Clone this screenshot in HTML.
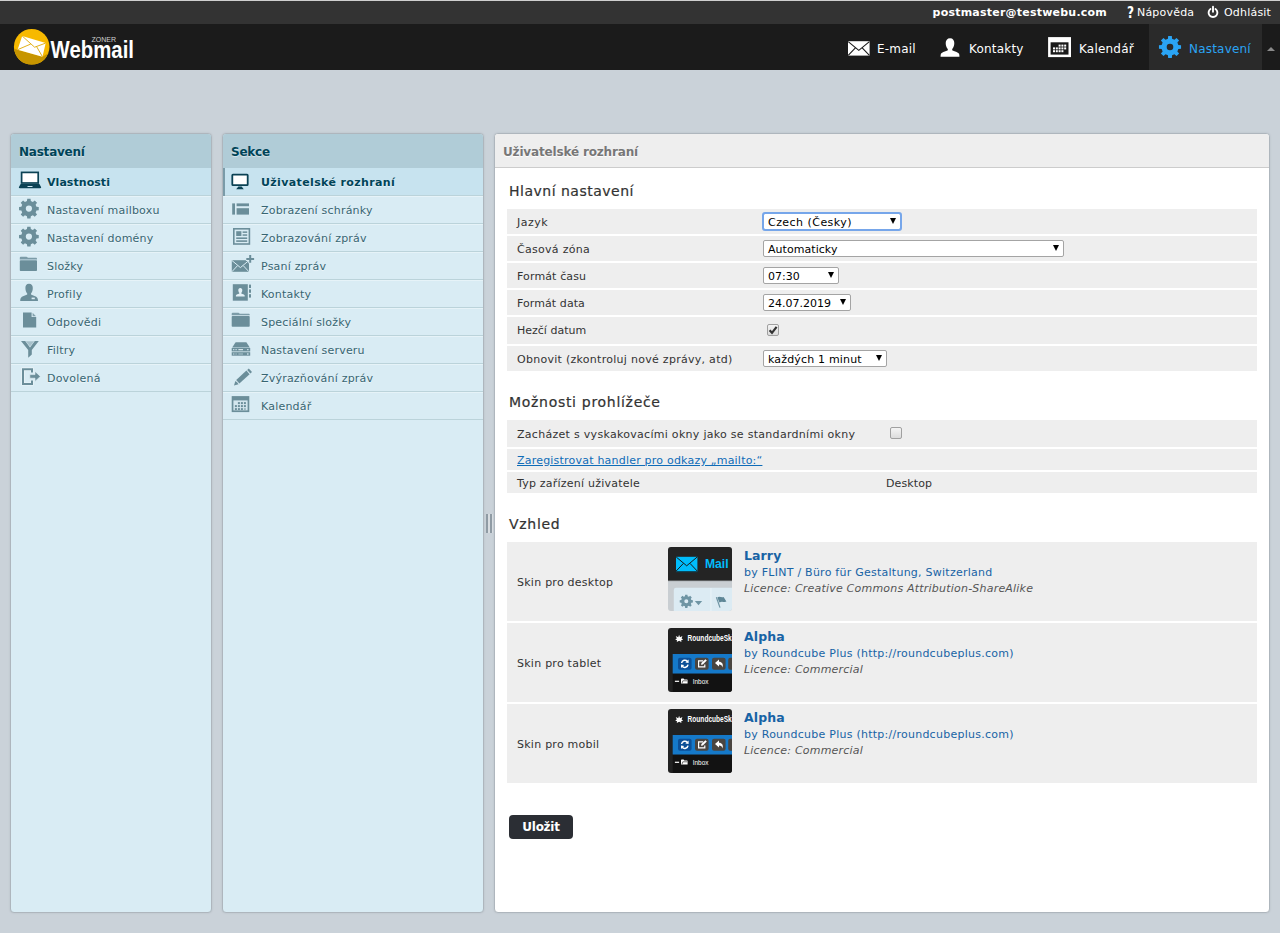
<!DOCTYPE html>
<html lang="cs">
<head>
<meta charset="utf-8">
<title>Zoner Webmail :: Nastavení</title>
<style>
*{box-sizing:content-box}
html,body{margin:0;padding:0;width:1280px;height:933px;overflow:hidden}
body{font-family:"DejaVu Sans","Liberation Sans",sans-serif;font-size:11px;color:#333;background:#cad2d9;position:relative}
a{text-decoration:none;color:inherit}
#topline{position:absolute;left:0;top:0;width:1280px;height:24px;background:#333}
#topline .user{position:absolute;right:173px;top:6px;color:#fff;font-weight:bold;font-size:11px;letter-spacing:.22px}
#topline .lnk{position:absolute;top:6px;color:#fff;font-size:11px}
#topnav{position:absolute;left:0;top:24px;width:1280px;height:46px;background:#1b1b1b}
#taskbar a{position:absolute;top:0;height:46px;color:#fff;font-size:12px}
#taskbar a span{position:absolute;top:18px;white-space:nowrap}
#taskbar a.sel{background:#2a2a2a;color:#2aa4f4}
.uibox{position:absolute;border:1px solid #aeb6bd;border-radius:4px;box-shadow:0 0 2px #b4bcc3;background:#fff;overflow:hidden}
.listbox{background:#d9ecf4}
.boxtitle{height:19px;padding:11px 8px 3px 8px;margin:0;font-size:12px;font-weight:bold;background:#b0ccd7;color:#004458;border-bottom:1px solid #b0ccd7;text-shadow:0 1px 1px rgba(255,255,255,.5);white-space:nowrap}
.listitem{display:block;border-top:1px solid #e6f3f8;border-bottom:1px solid #bbd3da;height:26px;position:relative;color:#376572;text-shadow:0 1px 1px rgba(255,255,255,.6);white-space:nowrap}
.listitem span{position:absolute;left:36px;top:7px}
.listitem.selected{background:#c7e3ef;border-top-color:#c7e3ef;color:#004458;font-weight:bold}
.listitem svg{position:absolute;left:0;top:0}
#prefs-title{height:19px;padding:11px 8px 3px 8px;font-size:12px;font-weight:bold;color:#777;background:#eee;border-bottom:1px solid #ccc;text-shadow:0 1px 1px #fff}

h1,h2{margin:0}
.listitem,.lnk,td,.legend{letter-spacing:.2px}
.selected span{letter-spacing:.37px}
#settings-sections .selected span{letter-spacing:.05px}
.boxtitle{letter-spacing:-.22px}
#prefs-title{letter-spacing:-.16px}
#splitter{position:absolute;left:486px;top:514px;width:7px;height:19px;background:linear-gradient(90deg,#8f9ba4 0,#8f9ba4 2px,#d8dde1 2px,#d8dde1 4px,#8f9ba4 4px,#8f9ba4 6px,#d8dde1 6px)}
#sectionslist .listitem span{left:38px}
.legend{position:absolute;left:509px;font-size:14px;color:#333;white-space:nowrap;-webkit-text-stroke:.2px #333}
.row{position:absolute;left:507px;width:750px;background:#eee}
.row .lbl{position:absolute;left:10px;white-space:nowrap;color:#333;letter-spacing:.2px}
.dd{position:absolute;height:15px;border:1px solid #a4a4a4;border-radius:2px;background:#fff;color:#000;font-size:11px;letter-spacing:.2px}
.dd span{position:absolute;left:4px;top:2px;white-space:nowrap}
.dd.focus{outline:2px solid #76a6ea;outline-offset:-1px;border-radius:2px;border-color:#76a6ea}
.dd i{position:absolute;right:4px;top:4px;width:0;height:0;border-left:3.5px solid transparent;border-right:3.5px solid transparent;border-top:6px solid #000}
.cb{position:absolute;width:10px;height:10px;border:1px solid #a0a0a0;border-radius:2px;background:linear-gradient(#f4f4f4,#dcdcdc)}
.skin .nm{position:absolute;left:237px;top:6px;font-size:12.5px;font-weight:bold;color:#1763a5;letter-spacing:.3px}
.skin .by{position:absolute;left:237px;top:24px;color:#1763a5;white-space:nowrap;letter-spacing:.25px}
.skin .lic{position:absolute;left:237px;top:39.5px;color:#555;font-style:italic;white-space:nowrap;letter-spacing:.25px}
.skin svg{position:absolute;left:161px;top:5px;border-radius:3px}
#savebtn{position:absolute;left:509px;top:815px;width:64px;height:24px;border-radius:4px;background:#2b2e34;color:#fff;font-weight:bold;font-size:12px;text-align:center;line-height:24px;letter-spacing:-.27px}
#topline .q{position:absolute;left:1126.5px;top:3px;color:#fff;font-size:16px;font-weight:bold;transform:scaleX(.76);transform-origin:0 0}
#topline .pw{position:absolute;left:1206px;top:5px}
#topline:before{content:"";position:absolute;left:0;top:0;width:1280px;height:1px;background:#cfcfcf}
#logo{position:absolute;left:8px;top:0}
#tbarrow{position:absolute;left:1267px;top:23px;width:0;height:0;border-left:4px solid transparent;border-right:4px solid transparent;border-bottom:4px solid #8a8a8a}
#taskbar a span{letter-spacing:.2px}
#sectionslist .selected:before{content:"";position:absolute;left:0;top:-1px;width:2px;height:28px;background:#7a9ba8}
</style>
</head>
<body>
<div id="topline">
  <span class="user">postmaster@testwebu.com</span>
  <b class="q">?</b>
  <a class="lnk" style="left:1137px">Nápověda</a>
  <svg class="pw" width="14" height="14" viewBox="0 0 14 14"><path d="M4.5 4 A4.4 4.4 0 1 0 9.5 4" fill="none" stroke="#fff" stroke-width="1.9" stroke-linecap="round"/><path d="M7 1.6 L7 6.8" stroke="#fff" stroke-width="1.9" stroke-linecap="round"/></svg>
  <a class="lnk" style="left:1224px">Odhlásit</a>
</div>
<div id="topnav">
  <svg id="logo" width="140" height="46" viewBox="0 0 140 46">
    <defs><clipPath id="lc"><circle cx="23.7" cy="22.8" r="17.8"/></clipPath></defs>
    <circle cx="23.7" cy="22.8" r="17.8" fill="#f7b900"/>
    <path d="M0 23 L9.6 25.7 L34.5 32.8 L46 26 L46 46 L0 46Z" fill="#c79500" clip-path="url(#lc)"/>
    <path d="M14.2 12 L37.7 19.1 L34.5 32.8 L9.6 25.7Z" fill="#fff"/>
    <path d="M14.2 12 L26.6 23.2 L37.7 19.1 M9.6 25.7 L22.8 20 M34.5 32.8 L28.6 22.6" fill="none" stroke="#dfa800" stroke-width=".9"/>
    <text x="42.6" y="33.8" font-family="Liberation Sans, sans-serif" font-weight="bold" font-size="23.6" fill="#fff" textLength="83.4" lengthAdjust="spacingAndGlyphs">Webmail</text>
    <text x="83.4" y="17.7" font-family="Liberation Sans, sans-serif" font-size="7" fill="#d0d0d0" textLength="24.6" lengthAdjust="spacingAndGlyphs">ZONER</text>
  </svg>
  <div id="taskbar">
    <a style="left:838px;width:86px"><svg width="24" height="17" viewBox="0 0 24 17" style="position:absolute;left:9px;top:16.4px"><rect x="1" y="1.2" width="21.6" height="14.4" fill="#fff"/><path d="M1.2 1.6 L11.8 10.4 L22.4 1.6 M1.2 15.4 L8.4 7.8 M22.4 15.4 L15.2 7.8" fill="none" stroke="#1b1b1b" stroke-width="1.1"/></svg><span style="left:39px">E-mail</span></a>
    <a style="left:930px;width:104px"><svg width="22" height="21" viewBox="-0.6 -0.8 23 22" style="position:absolute;left:9px;top:13px"><path d="M11 .6 C14 .6 15.4 2.8 15.4 5.6 C15.4 8.4 14.4 10.6 13.2 11.8 L13.2 13 C15.4 14.2 19.4 14.8 20.4 16.8 Q20.8 17.8 20.8 19.9 L1 19.9 Q1 17.8 1.4 16.8 C2.4 14.8 6.4 14.2 8.6 13 L8.6 11.8 C7.4 10.6 6.4 8.4 6.4 5.6 C6.4 2.8 8 .6 11 .6Z" fill="#fff"/></svg><span style="left:39px">Kontakty</span></a>
    <a style="left:1040px;width:104px"><svg width="24" height="21" viewBox="0 0 24 21" style="position:absolute;left:8px;top:12.8px"><rect x=".1" y=".1" width="22.9" height="20" fill="#fff"/><rect x="2.6" y="5.3" width="17.9" height="12.3" fill="#1b1b1b"/>
      <g fill="#fff"><rect x="10.6" y="7.6" width="2" height="2"/><rect x="13.4" y="7.6" width="2" height="2"/><rect x="16.2" y="7.6" width="2" height="2"/>
      <rect x="5" y="10.4" width="2" height="2"/><rect x="7.8" y="10.4" width="2" height="2"/><rect x="10.6" y="10.4" width="2" height="2"/><rect x="13.4" y="10.4" width="2" height="2"/><rect x="16.2" y="10.4" width="2" height="2"/>
      <rect x="5" y="13.2" width="2" height="2"/><rect x="7.8" y="13.2" width="2" height="2"/><rect x="10.6" y="13.2" width="2" height="2"/><rect x="13.4" y="13.2" width="2" height="2"/></g></svg><span style="left:39px">Kalendář</span></a>
    <a class="sel" style="left:1149px;width:113px"><svg width="24" height="24" viewBox="0 0 24 24" style="position:absolute;left:9px;top:11.3px"><path d="M9.93 3.65 L10.16 0.95 L13.84 0.95 L14.07 3.65 L16.44 4.63 L18.51 2.89 L21.11 5.49 L19.37 7.56 L20.35 9.93 L23.05 10.16 L23.05 13.84 L20.35 14.07 L19.37 16.44 L21.11 18.51 L18.51 21.11 L16.44 19.37 L14.07 20.35 L13.84 23.05 L10.16 23.05 L9.93 20.35 L7.56 19.37 L5.49 21.11 L2.89 18.51 L4.63 16.44 L3.65 14.07 L0.95 13.84 L0.95 10.16 L3.65 9.93 L4.63 7.56 L2.89 5.49 L5.49 2.89 L7.56 4.63Z M8.70 12.00 a3.30 3.30 0 1 0 6.60 0 a3.30 3.30 0 1 0 -6.60 0Z" fill="#2aa4f4" fill-rule="evenodd"/></svg><span style="left:40px">Nastavení</span></a>
  </div>
  <div id="tbarrow"></div>
</div>
<div class="uibox listbox" id="settings-sections" style="left:10px;top:133px;width:200px;height:778px">
  <h2 class="boxtitle">Nastavení</h2>
  <a class="listitem selected"><svg width="34" height="26" viewBox="0 0 34 26" ><rect x="10.6" y="3.4" width="16.6" height="10.6" fill="#fff" stroke="#0b4254" stroke-width="1.7"/><path d="M9.6 15 L28.4 15 L30.2 18.2 Q30.2 19.2 29 19.2 L9 19.2 Q7.8 19.2 7.8 18.2Z" fill="#0b4254"/><rect x="16.5" y="17" width="5" height="1" fill="#cfe6f0"/></svg><span>Vlastnosti</span></a>
  <a class="listitem"><svg width="34" height="26" viewBox="0 0 34 26" ><path d="M15.96 4.05 L16.26 1.74 L19.54 1.74 L19.84 4.05 L21.87 4.89 L23.71 3.46 L26.04 5.79 L24.61 7.63 L25.45 9.66 L27.76 9.96 L27.76 13.24 L25.45 13.54 L24.61 15.57 L26.04 17.41 L23.71 19.74 L21.87 18.31 L19.84 19.15 L19.54 21.46 L16.26 21.46 L15.96 19.15 L13.93 18.31 L12.09 19.74 L9.76 17.41 L11.19 15.57 L10.35 13.54 L8.04 13.24 L8.04 9.96 L10.35 9.66 L11.19 7.63 L9.76 5.79 L12.09 3.46 L13.93 4.89Z M14.80 11.60 a3.10 3.10 0 1 0 6.20 0 a3.10 3.10 0 1 0 -6.20 0Z" fill="#6b8e9a" fill-rule="evenodd"/></svg><span>Nastavení mailboxu</span></a>
  <a class="listitem"><svg width="34" height="26" viewBox="0 0 34 26" ><path d="M15.96 4.05 L16.26 1.74 L19.54 1.74 L19.84 4.05 L21.87 4.89 L23.71 3.46 L26.04 5.79 L24.61 7.63 L25.45 9.66 L27.76 9.96 L27.76 13.24 L25.45 13.54 L24.61 15.57 L26.04 17.41 L23.71 19.74 L21.87 18.31 L19.84 19.15 L19.54 21.46 L16.26 21.46 L15.96 19.15 L13.93 18.31 L12.09 19.74 L9.76 17.41 L11.19 15.57 L10.35 13.54 L8.04 13.24 L8.04 9.96 L10.35 9.66 L11.19 7.63 L9.76 5.79 L12.09 3.46 L13.93 4.89Z M14.80 11.60 a3.10 3.10 0 1 0 6.20 0 a3.10 3.10 0 1 0 -6.20 0Z" fill="#6b8e9a" fill-rule="evenodd"/></svg><span>Nastavení domény</span></a>
  <a class="listitem"><svg width="34" height="26" viewBox="0 0 34 26" ><path d="M8.8 6.4 L8.8 4.8 Q8.8 3.8 9.8 3.8 L15.3 3.8 Q16.3 3.8 16.8 4.8 L25.2 4.8 Q26 4.8 26 5.8 L26 6.4Z" fill="#6b8e9a" opacity=".85"/><rect x="8.8" y="7.199999999999999" width="17.2" height="10.799999999999999" rx=".8" fill="#6b8e9a"/></svg><span>Složky</span></a>
  <a class="listitem"><svg width="34" height="26" viewBox="0 0 34 26" ><path d="M18 2.8 C20.6 2.8 21.8 4.6 21.8 7 C21.8 9.4 21 11.4 20 12.4 L20 13.6 C22 14.6 25.4 15.2 26.4 17 Q27 18.2 27 20 L9.2 20 Q9.2 18.2 9.8 17 C10.8 15.2 14.2 14.6 16.2 13.6 L16.2 12.4 C15.2 11.4 14.4 9.4 14.4 7 C14.4 4.6 15.4 2.8 18 2.8Z" fill="#6b8e9a"/><rect x="20.6" y="16.6" width="3.2" height="1.6" fill="#d9ecf4"/></svg><span>Profily</span></a>
  <a class="listitem"><svg width="34" height="26" viewBox="0 0 34 26" ><path d="M12 3.4 L20.6 3.4 L20.6 8 L25.2 8 L25.2 18.4 L12 18.4Z" fill="#6b8e9a"/><path d="M21.6 3.8 L25 7.2 L21.6 7.2Z" fill="#6b8e9a" opacity=".8"/></svg><span>Odpovědi</span></a>
  <a class="listitem"><svg width="34" height="26" viewBox="0 0 34 26" ><path d="M10 4 L14.2 4 L19 10.4 L23.8 4 L27.8 4 L20.8 13 L20.8 17.6 L17.2 20.8 L17.2 13Z" fill="#6b8e9a"/><path d="M14.8 4.2 L23.2 4.2 L19 9.6Z" fill="#6b8e9a" opacity=".45"/></svg><span>Filtry</span></a>
  <a class="listitem"><svg width="34" height="26" viewBox="0 0 34 26" ><path d="M21 7.4 L21 4.2 L12 4.2 L12 19 L21 19 L21 15.6" fill="none" stroke="#fff" stroke-width="3.2" opacity=".55"/><path d="M21 7.6 L21 4.2 L12 4.2 L12 19 L21 19 L21 15.4" fill="none" stroke="#6b8e9a" stroke-width="2"/><path d="M18.8 9.6 L24 9.6 L24 6.4 L29.4 11.4 L24 16.4 L24 13.2 L18.8 13.2Z" fill="#6b8e9a" stroke="#e8f4f9" stroke-width=".6"/></svg><span>Dovolená</span></a>
</div>
<div class="uibox listbox" id="sectionslist" style="left:222px;top:133px;width:260px;height:778px">
  <h2 class="boxtitle">Sekce</h2>
  <a class="listitem selected"><svg width="34" height="26" viewBox="0 0 34 26" ><rect x="9.3" y="5.7" width="15.4" height="10.4" rx=".6" fill="#fff" stroke="#0b4254" stroke-width="1.8"/><path d="M15.4 17.4 L18.6 17.4 L20.8 20.2 L13.2 20.2Z" fill="#0b4254"/></svg><span>Uživatelské rozhraní</span></a>
  <a class="listitem"><svg width="34" height="26" viewBox="0 0 34 26" ><rect x="9.2" y="6.4" width="2.8" height="11.2" fill="#6b8e9a"/><rect x="13.6" y="6.4" width="12.4" height="2.8" fill="#6b8e9a"/><rect x="13.6" y="11.2" width="12.4" height="6.4" fill="#6b8e9a"/></svg><span>Zobrazení schránky</span></a>
  <a class="listitem"><svg width="34" height="26" viewBox="0 0 34 26" ><rect x="10.8" y="3.8" width="15.6" height="15.2" fill="none" stroke="#6b8e9a" stroke-width="1.6"/><rect x="13.2" y="6.2" width="5.2" height="4.8" fill="#6b8e9a"/><rect x="19.6" y="6.4" width="4.6" height="1.5" fill="#6b8e9a"/><rect x="19.6" y="9.3" width="4.6" height="1.5" fill="#6b8e9a"/><rect x="13.2" y="12.4" width="11" height="1.6" fill="#6b8e9a"/><rect x="13.2" y="15.3" width="11" height="1.6" fill="#6b8e9a"/></svg><span>Zobrazování zpráv</span></a>
  <a class="listitem"><svg width="34" height="26" viewBox="0 0 34 26" ><rect x="8.8" y="7.2" width="17.2" height="11.6" fill="#6b8e9a"/><path d="M8.8 7.4 L17.4 14.6 L26 7.4 M8.8 18.8 L14.6 12.6 M26 18.8 L20.2 12.6" fill="none" stroke="#d9ecf4" stroke-width="1"/><path d="M27.2 1.6 L27.2 10.2 M22.9 5.9 L31.5 5.9" stroke="#d9ecf4" stroke-width="4"/><path d="M27.2 2 L27.2 9.8 M23.3 5.9 L31.1 5.9" stroke="#6b8e9a" stroke-width="2"/></svg><span>Psaní zpráv</span></a>
  <a class="listitem"><svg width="34" height="26" viewBox="0 0 34 26" ><rect x="9.8" y="3.2" width="15" height="16.5" fill="#6b8e9a"/><rect x="26" y="3.6" width="2" height="3.4" fill="#6b8e9a"/><rect x="26" y="8.4" width="2" height="3.4" fill="#6b8e9a"/><rect x="26" y="13.2" width="2" height="3.4" fill="#6b8e9a"/><path d="M17.3 7 C18.7 7 19.3 8 19.3 9.2 C19.3 10.4 18.8 11.3 18.3 11.8 L18.3 12.6 C19.6 13.2 21.2 13.4 21.7 14.6 L21.7 15.6 L12.9 15.6 L12.9 14.6 C13.4 13.4 15 13.2 16.3 12.6 L16.3 11.8 C15.8 11.3 15.3 10.4 15.3 9.2 C15.3 8 15.9 7 17.3 7Z" fill="#e4f1f7"/></svg><span>Kontakty</span></a>
  <a class="listitem"><svg width="34" height="26" viewBox="0 0 34 26" ><path d="M8.7 6.300000000000001 L8.7 4.7 Q8.7 3.7 9.7 3.7 L15.2 3.7 Q16.2 3.7 16.7 4.7 L25.9 4.7 Q26.7 4.7 26.7 5.7 L26.7 6.300000000000001Z" fill="#6b8e9a" opacity=".85"/><rect x="8.7" y="7.1" width="18.0" height="10.6" rx=".8" fill="#6b8e9a"/></svg><span>Speciální složky</span></a>
  <a class="listitem"><svg width="34" height="26" viewBox="0 0 34 26" ><path d="M12.6 5.2 L23.4 5.2 L26.8 10.4 L9.2 10.4Z" fill="#6b8e9a"/><rect x="8.7" y="11" width="18.5" height="3.4" fill="#6b8e9a"/><rect x="8.7" y="15.2" width="18.5" height="3.5" fill="#6b8e9a"/><rect x="10" y="12.2" width="1.4" height="1" fill="#d9ecf4"/><rect x="12.4" y="12.2" width="1.4" height="1" fill="#d9ecf4"/><rect x="15.4" y="12.2" width="4.6" height="1" fill="#eef7fb"/><rect x="24" y="12.2" width="1.6" height="1" fill="#d9ecf4"/><rect x="10" y="16.4" width="1.4" height="1.2" fill="#d9ecf4" opacity=".7"/><rect x="12.4" y="16.4" width="1.4" height="1.2" fill="#d9ecf4" opacity=".5"/><rect x="15.4" y="16.4" width="4.6" height="1.2" fill="#d9ecf4" opacity=".5"/><rect x="24" y="16.4" width="1.6" height="1.2" fill="#d9ecf4"/></svg><span>Nastavení serveru</span></a>
  <a class="listitem"><svg width="34" height="26" viewBox="0 0 34 26" ><path d="M11 20.6 L12.4 16 L14.2 17.4 L15.6 19.2Z" fill="#6b8e9a"/><path d="M13.2 15 L23.4 5.6 L26.6 9.2 L16.4 18.6Z" fill="#6b8e9a"/><path d="M24.2 4.9 L25.8 3.4 L29 7 L27.4 8.5Z" fill="#6b8e9a"/></svg><span>Zvýrazňování zpráv</span></a>
  <a class="listitem"><svg width="34" height="26" viewBox="0 0 34 26" ><rect x="8.7" y="3.1" width="17.6" height="16" fill="#6b8e9a"/><rect x="10.4" y="7.4" width="14.2" height="10" fill="#d3e6ee"/><rect x="14.9" y="9.1" width="2" height="2" fill="#6b8e9a" opacity="1"/><rect x="17.9" y="9.1" width="2" height="2" fill="#6b8e9a" opacity="1"/><rect x="20.9" y="9.1" width="2" height="2" fill="#6b8e9a" opacity="1"/><rect x="11.9" y="12.1" width="2" height="2" fill="#6b8e9a" opacity="1"/><rect x="14.9" y="12.1" width="2" height="2" fill="#6b8e9a" opacity="1"/><rect x="17.9" y="12.1" width="2" height="2" fill="#6b8e9a" opacity="1"/><rect x="20.9" y="12.1" width="2" height="2" fill="#6b8e9a" opacity="1"/><rect x="11.9" y="15.1" width="2" height="2" fill="#6b8e9a" opacity="1"/><rect x="14.9" y="15.1" width="2" height="2" fill="#6b8e9a" opacity="1"/><rect x="17.9" y="15.1" width="2" height="2" fill="#6b8e9a" opacity="1"/><rect x="20.9" y="15.1" width="2" height="2" fill="#6b8e9a" opacity=".55"/></svg><span>Kalendář</span></a>
</div>
<div class="uibox" id="prefs" style="left:494px;top:133px;width:774px;height:778px">
  <h1 id="prefs-title">Uživatelské rozhraní</h1>
</div>
<div id="form">
  <div class="legend" style="top:183px;letter-spacing:0.5px">Hlavní nastavení</div>
  <div class="row" style="top:209px;height:25px"><span class="lbl" style="top:7px;letter-spacing:0.48px">Jazyk</span><div class="dd focus" style="left:256px;top:4px;width:136px"><span style="letter-spacing:0.46px">Czech (Česky)</span><i></i></div></div>
  <div class="row" style="top:236px;height:25px"><span class="lbl" style="top:7px;letter-spacing:0.29px">Časová zóna</span><div class="dd" style="left:256px;top:4px;width:299px"><span style="letter-spacing:0.05px">Automaticky</span><i></i></div></div>
  <div class="row" style="top:263px;height:25px"><span class="lbl" style="top:7px;letter-spacing:0.13px">Formát času</span><div class="dd" style="left:256px;top:4px;width:74px"><span style="letter-spacing:0px">07:30</span><i></i></div></div>
  <div class="row" style="top:290px;height:25px"><span class="lbl" style="top:7px;letter-spacing:0.08px">Formát data</span><div class="dd" style="left:256px;top:4px;width:86px"><span style="letter-spacing:0px">24.07.2019</span><i></i></div></div>
  <div class="row" style="top:317px;height:27px"><span class="lbl" style="top:7px;letter-spacing:0px">Hezčí datum</span><div class="cb" style="left:260px;top:7px"><svg width="12" height="12" viewBox="0 0 12 12" style="position:absolute;left:-1px;top:-1px"><path d="M2.6 6.2 L5 8.8 L9.6 2.8" fill="none" stroke="#333" stroke-width="2.2"/></svg></div></div>
  <div class="row" style="top:346px;height:25px"><span class="lbl" style="top:7px;letter-spacing:0.28px">Obnovit (zkontroluj nové zprávy, atd)</span><div class="dd" style="left:256px;top:4px;width:122px"><span style="letter-spacing:0.17px">každých 1 minut</span><i></i></div></div>
  <div class="legend" style="top:394px;letter-spacing:0.7px">Možnosti prohlížeče</div>
  <div class="row" style="top:420px;height:27px"><span class="lbl" style="top:8px;letter-spacing:0.29px">Zacházet s vyskakovacími okny jako se standardními okny</span><div class="cb" style="left:383px;top:7px"></div></div>
  <div class="row" style="top:449px;height:21px"><span class="lbl" style="top:5px;letter-spacing:0.21px;color:#0f6cb8;text-decoration:underline">Zaregistrovat handler pro odkazy „mailto:“</span></div>
  <div class="row" style="top:472px;height:21px"><span class="lbl" style="top:5px;letter-spacing:0.22px">Typ zařízení uživatele</span><span class="lbl" style="top:5px;left:379px;letter-spacing:0.1px">Desktop</span></div>
  <div class="legend" style="top:516px;letter-spacing:0.7px">Vzhled</div>
  <div class="row skin" style="top:542px;height:79px"><span class="lbl" style="top:34px;letter-spacing:0.25px">Skin pro desktop</span><svg width="64" height="64" viewBox="0 0 64 64"><rect width="64" height="64" fill="#c9ced2"/><rect width="64" height="33.8" fill="#242424"/><rect x="0" y="33.8" width="64" height="1" fill="#b9bec2"/><path d="M5.8 64 L5.8 43 Q5.8 40.8 8 40.8 L64 40.8 L64 64Z" fill="#dcebf3"/><rect x="42.4" y="41" width="1" height="23" fill="#eaf4f9"/><rect x="8" y="9.8" width="21.4" height="14.4" fill="#00bdfc"/><rect x="8" y="24.2" width="21.4" height="1" fill="#0a4a60"/><path d="M8.2 10 L18.7 18.8 L29.2 10 M8.2 24 L15.4 16.4 M29.2 24 L22 16.4" fill="none" stroke="#1a1a1a" stroke-width="1"/><text x="37" y="20.8" font-family="Liberation Sans, sans-serif" font-weight="bold" font-size="13" fill="#00bdfc" textLength="23.6" lengthAdjust="spacingAndGlyphs">Mail</text><path d="M16.97 49.27 L17.15 47.70 L19.45 47.70 L19.63 49.27 L20.91 49.80 L22.15 48.82 L23.78 50.45 L22.80 51.69 L23.33 52.97 L24.90 53.15 L24.90 55.45 L23.33 55.63 L22.80 56.91 L23.78 58.15 L22.15 59.78 L20.91 58.80 L19.63 59.33 L19.45 60.90 L17.15 60.90 L16.97 59.33 L15.69 58.80 L14.45 59.78 L12.82 58.15 L13.80 56.91 L13.27 55.63 L11.70 55.45 L11.70 53.15 L13.27 52.97 L13.80 51.69 L12.82 50.45 L14.45 48.82 L15.69 49.80Z M16.30 54.30 a2.00 2.00 0 1 0 4.00 0 a2.00 2.00 0 1 0 -4.00 0Z" fill="#6f95a4" fill-rule="evenodd"/><path d="M26.8 54 L34.2 54 L30.5 58.2Z" fill="#6f95a4"/><path d="M48.4 50.2 L52 60.6" stroke="#6f95a4" stroke-width="1.2" fill="none"/><path d="M49.4 50.4 C51.4 48.6 53.4 51 55.6 50 L58.4 54.6 C56.2 55.8 54 53.6 51.4 55.6Z" fill="#5f8797"/></svg><span class="nm" style="letter-spacing:0.1px">Larry</span><span class="by" style="letter-spacing:0.25px">by FLINT / Büro für Gestaltung, Switzerland</span><span class="lic" style="letter-spacing:0.21px">Licence: Creative Commons Attribution-ShareAlike</span></div>
  <div class="row skin" style="top:623px;height:79px"><span class="lbl" style="top:34px;letter-spacing:0.25px">Skin pro tablet</span><svg width="64" height="64" viewBox="0 0 64 64"><rect width="64" height="64" fill="#212121"/><rect x="4.7" y="45.5" width="59.3" height="18.5" fill="#121212"/><rect x="4.7" y="26" width="59.3" height="19.5" fill="#1579c9"/><rect x="10" y="29.8" width="13.6" height="12" rx="2" fill="#0c4f97"/><rect x="27" y="29.8" width="13.6" height="12" rx="2" fill="#4a4540"/><rect x="44" y="29.8" width="13.6" height="12" rx="2" fill="#4a4540"/><rect x="60.2" y="29.8" width="8" height="12" rx="2" fill="#4a4540"/><path d="M13.6 35 A3.3 3.3 0 0 1 19.4 33.4 M20 36.6 A3.3 3.3 0 0 1 14.2 38.2" fill="none" stroke="#fff" stroke-width="1.5"/><path d="M20.6 31.6 L20.6 35 L17.4 34.6Z M13 40 L13 36.6 L16.2 37Z" fill="#fff"/><path d="M35.2 32.8 L30.6 32.8 L30.6 38.8 L36.8 38.8 L36.8 36.6" fill="none" stroke="#fff" stroke-width="1.2"/><path d="M33 36.8 L33.4 35 L37.4 31.2 L38.8 32.6 L34.8 36.4Z" fill="#fff"/><path d="M47 35 L51 31.6 L51 33.8 C54 33.8 55.4 36 54.6 39.4 C54 37.4 53 36.6 51 36.6 L51 38.6Z" fill="#fff"/><path d="M11.1 6.8 L12 9.2 L14.4 8 L13.6 10.4 L15.2 11.6 L13.2 12.2 L13.4 14 L11.1 12.8 L8.8 14 L9 12.2 L7.2 11.6 L8.8 10.4 L7.8 8 L10.2 9.2Z" fill="#fff"/><text x="19.6" y="13.2" font-family="Liberation Sans, sans-serif" font-weight="bold" font-size="8.4" fill="#fff" textLength="50" lengthAdjust="spacingAndGlyphs">RoundcubeSkin</text><rect x="6.9" y="52.7" width="4.2" height="1.2" fill="#fff"/><path d="M13 55.6 L13 51.2 Q13 50.4 13.8 50.4 L15.6 50.4 L16.4 51.4 L19 51.4 Q19.6 51.4 19.6 52 L19.6 55.6Z" fill="#fff"/><path d="M14 55.2 L14.8 52.8 L19.4 52.8" stroke="#121212" stroke-width=".6" fill="none"/><text x="24.8" y="55.7" font-family="Liberation Sans, sans-serif" font-size="6.6" fill="#fff" textLength="15.6" lengthAdjust="spacingAndGlyphs">Inbox</text></svg><span class="nm" style="letter-spacing:0.1px">Alpha</span><span class="by" style="letter-spacing:0.25px">by Roundcube Plus (http://roundcubeplus.com)</span><span class="lic" style="letter-spacing:0.21px">Licence: Commercial</span></div>
  <div class="row skin" style="top:704px;height:79px"><span class="lbl" style="top:34px;letter-spacing:0.25px">Skin pro mobil</span><svg width="64" height="64" viewBox="0 0 64 64"><rect width="64" height="64" fill="#212121"/><rect x="4.7" y="45.5" width="59.3" height="18.5" fill="#121212"/><rect x="4.7" y="26" width="59.3" height="19.5" fill="#1579c9"/><rect x="10" y="29.8" width="13.6" height="12" rx="2" fill="#0c4f97"/><rect x="27" y="29.8" width="13.6" height="12" rx="2" fill="#4a4540"/><rect x="44" y="29.8" width="13.6" height="12" rx="2" fill="#4a4540"/><rect x="60.2" y="29.8" width="8" height="12" rx="2" fill="#4a4540"/><path d="M13.6 35 A3.3 3.3 0 0 1 19.4 33.4 M20 36.6 A3.3 3.3 0 0 1 14.2 38.2" fill="none" stroke="#fff" stroke-width="1.5"/><path d="M20.6 31.6 L20.6 35 L17.4 34.6Z M13 40 L13 36.6 L16.2 37Z" fill="#fff"/><path d="M35.2 32.8 L30.6 32.8 L30.6 38.8 L36.8 38.8 L36.8 36.6" fill="none" stroke="#fff" stroke-width="1.2"/><path d="M33 36.8 L33.4 35 L37.4 31.2 L38.8 32.6 L34.8 36.4Z" fill="#fff"/><path d="M47 35 L51 31.6 L51 33.8 C54 33.8 55.4 36 54.6 39.4 C54 37.4 53 36.6 51 36.6 L51 38.6Z" fill="#fff"/><path d="M11.1 6.8 L12 9.2 L14.4 8 L13.6 10.4 L15.2 11.6 L13.2 12.2 L13.4 14 L11.1 12.8 L8.8 14 L9 12.2 L7.2 11.6 L8.8 10.4 L7.8 8 L10.2 9.2Z" fill="#fff"/><text x="19.6" y="13.2" font-family="Liberation Sans, sans-serif" font-weight="bold" font-size="8.4" fill="#fff" textLength="50" lengthAdjust="spacingAndGlyphs">RoundcubeSkin</text><rect x="6.9" y="52.7" width="4.2" height="1.2" fill="#fff"/><path d="M13 55.6 L13 51.2 Q13 50.4 13.8 50.4 L15.6 50.4 L16.4 51.4 L19 51.4 Q19.6 51.4 19.6 52 L19.6 55.6Z" fill="#fff"/><path d="M14 55.2 L14.8 52.8 L19.4 52.8" stroke="#121212" stroke-width=".6" fill="none"/><text x="24.8" y="55.7" font-family="Liberation Sans, sans-serif" font-size="6.6" fill="#fff" textLength="15.6" lengthAdjust="spacingAndGlyphs">Inbox</text></svg><span class="nm" style="letter-spacing:0.1px">Alpha</span><span class="by" style="letter-spacing:0.25px">by Roundcube Plus (http://roundcubeplus.com)</span><span class="lic" style="letter-spacing:0.21px">Licence: Commercial</span></div>
  <div id="savebtn">Uložit</div>
</div>
<div id="splitter"></div>
</body>
</html>
